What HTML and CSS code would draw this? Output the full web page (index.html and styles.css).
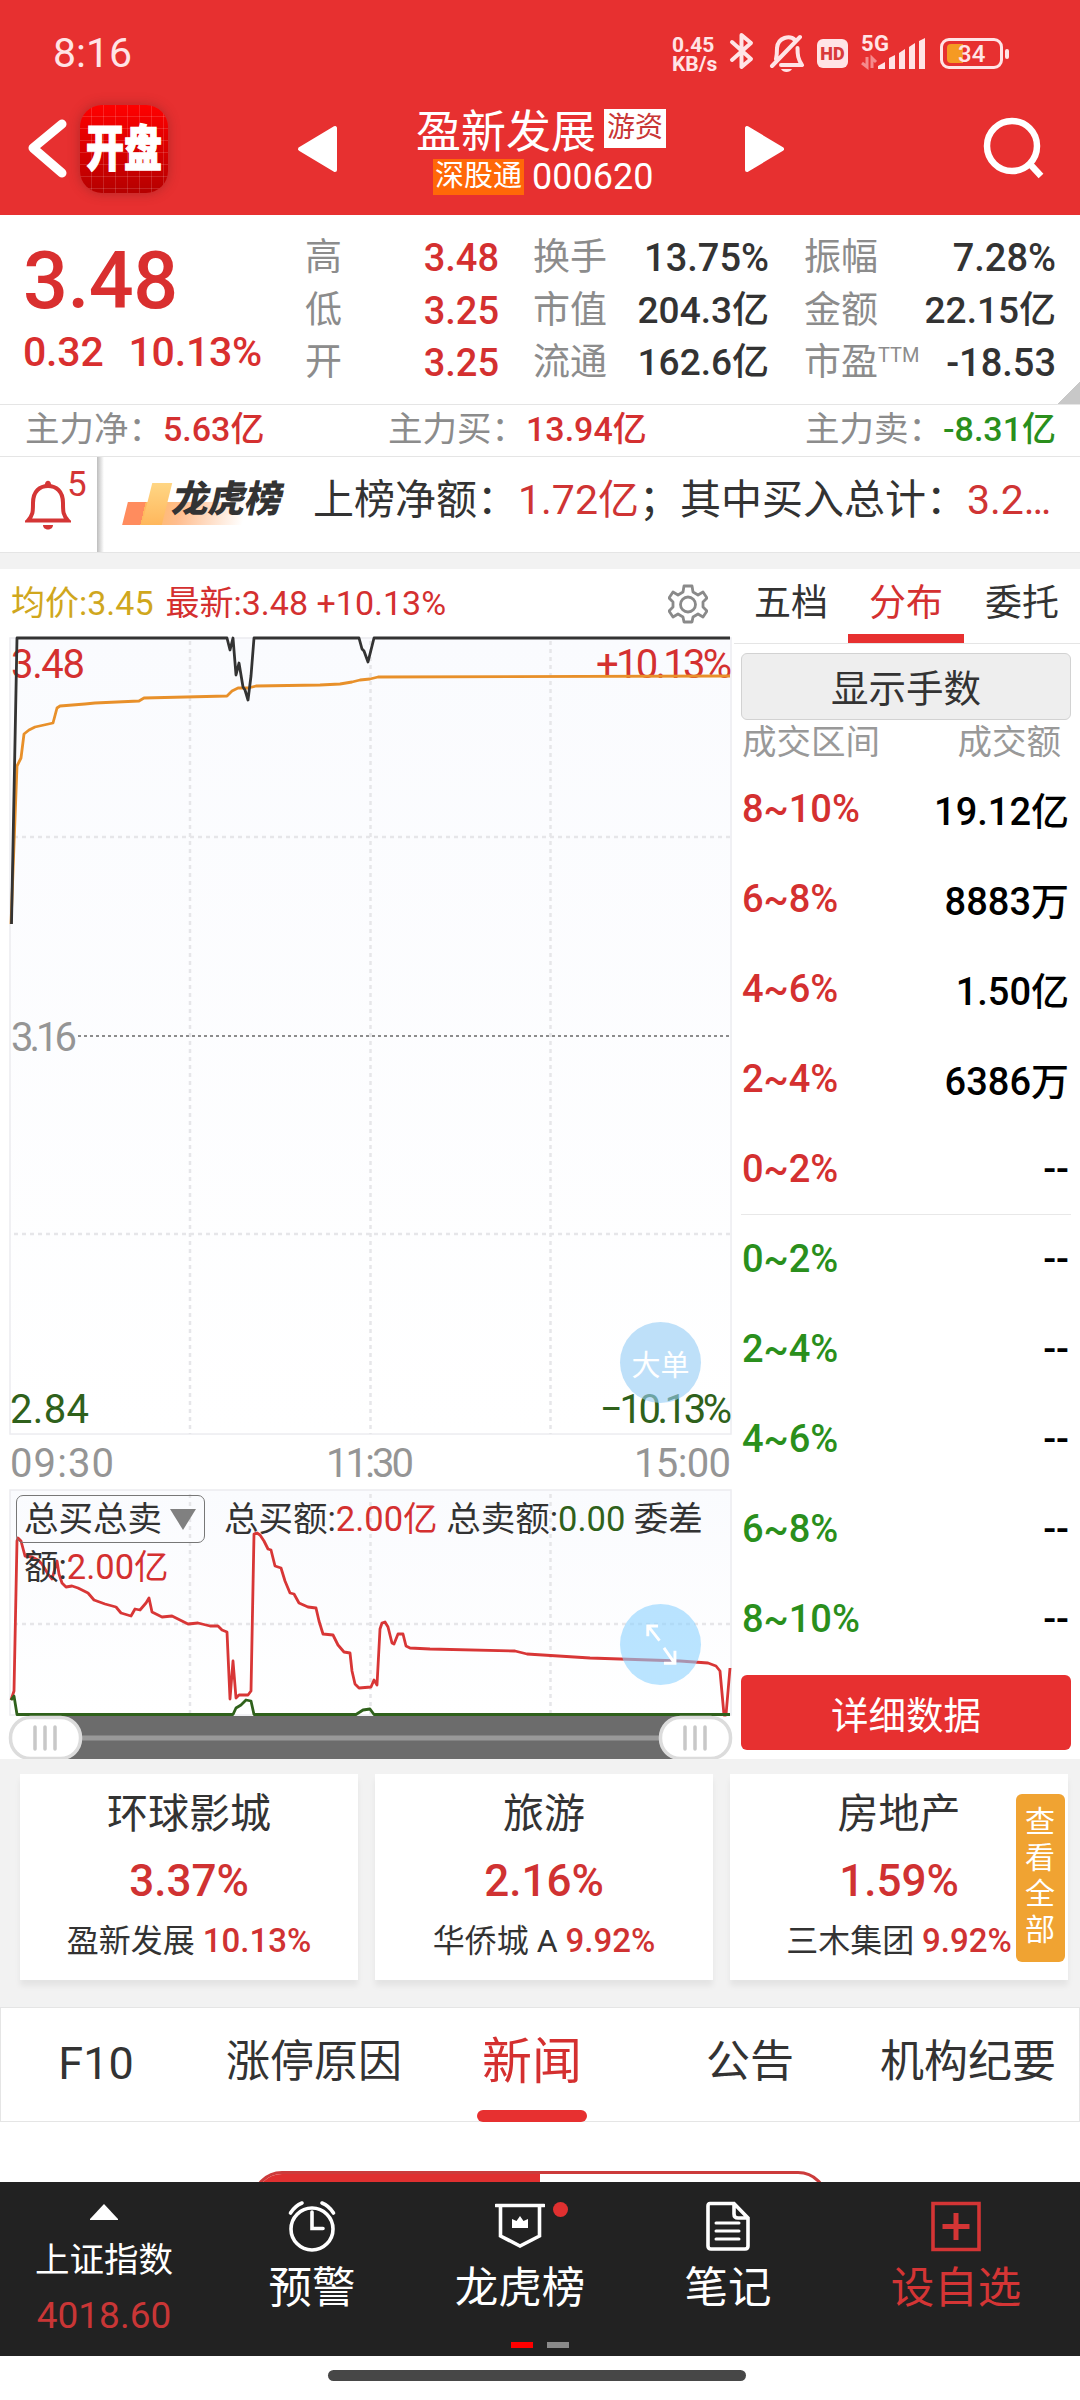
FILE: index.html
```html
<!DOCTYPE html>
<html lang="zh-CN">
<head>
    <meta charset="UTF-8">
    <meta name="viewport" content="width=device-width, initial-scale=1.0">
    <title>盈新发展 000620</title>
    <link rel="stylesheet" href="styles.css">
</head>
<body>
    <header class="header">
        <!-- Status bar -->
        <div class="status">
            <span class="clock">8:16</span>
            <div class="status-right">
                <div class="speed">0.45<br>KB/s</div>
                <svg class="bt" width="26" height="38" viewBox="0 0 26 38"><path d="M3 10 L22 27 L12.500 35 V3 L22 11 L3 28"/></svg>
                <svg class="mute" width="36" height="40" viewBox="0 0 36 40"><path d="M7 25 C8 21 8 18 8 14 C9 3 21 1 26 6 M28.500 14 C28.500 21 29 25 33 31 H12 M3 32 L31 3"/><path class="solid" d="M12 35 H23 C21 39 14 39 12 35 Z"/></svg>
                <span class="hd">HD</span>
                <svg class="signal" width="66" height="36" viewBox="0 0 66 36">
                    <path class="updown" d="M7 22 V32 L2 28 M12 33 V23 L16 27"/>
                    <path d="M18 31 L25 27 V34 H18 Z M29 23 L35 20 V34 H29 Z M39 18 L45 14 V34 H39 Z M49 12 L55 8 V34 H49 Z M59 6 L65 3 V34 H59 Z"/>
                    <text x="1" y="16" textLength="28">5G</text>
                </svg>
                <div class="battery"><i></i><b>34</b></div>
            </div>
        </div>
        <!-- Title bar -->
        <div class="titlebar">
            <svg class="back" width="40" height="62" viewBox="0 0 40 62"><path d="M35 6 L6 30 L35 55"/></svg>
            <div class="logo"><span>开盘</span></div>
            <svg class="prev" width="42" height="48" viewBox="0 0 42 48"><path d="M3 24 L38 3 V45 Z"/></svg>
            <div class="stock">
                <div class="stock-name">盈新发展<span class="tag">游资</span></div>
                <div class="stock-code"><span class="hk">深股通</span>000620</div>
            </div>
            <svg class="next" width="42" height="48" viewBox="0 0 42 48"><path d="M39 24 L4 3 V45 Z"/></svg>
            <svg class="search" width="62" height="64" viewBox="0 0 62 64"><circle cx="29" cy="29" r="25"/><path d="M46 46 L58 59"/></svg>
        </div>
    </header>

    <!-- Quote -->
    <section class="quote">
        <div class="price">
            <div class="last">3.48</div>
            <div class="change"><span>0.32</span><span>10.13%</span></div>
        </div>
        <dl class="stats">
            <dt>高</dt><dd class="up">3.48</dd><dt>换手</dt><dd>13.75%</dd><dt>振幅</dt><dd>7.28%</dd>
            <dt>低</dt><dd class="up">3.25</dd><dt>市值</dt><dd class="cn">204.3亿</dd><dt>金额</dt><dd class="cn">22.15亿</dd>
            <dt>开</dt><dd class="up">3.25</dd><dt>流通</dt><dd class="cn">162.6亿</dd><dt>市盈<sup>TTM</sup></dt><dd>-18.53</dd>
        </dl>
        <i class="corner"></i>
    </section>
    <section class="flow">
        <div>主力净：<b class="up">5.63亿</b></div>
        <div>主力买：<b class="up">13.94亿</b></div>
        <div>主力卖：<b class="down">-8.31亿</b></div>
    </section>
    <section class="notice">
        <div class="bell">
            <svg width="46" height="54" viewBox="0 0 46 54"><path d="M3 42.500 H43 C38 37 38 34 38 25 C38 13 31 8 23 8 C15 8 8 13 8 25 C8 34 8 37 3 42.500 Z"/><path class="solid" d="M20 8 C19 1 27 1 26 8 Z M18 47 H28 C28 53 18 53 18 47 Z"/></svg>
            <span>5</span>
        </div>
        <div class="lhb">
            <i class="s1"></i><i class="s2"></i>
            <span>龙虎榜</span>
        </div>
        <p>上榜净额：<em class="n1">1.72亿</em>；其中买入总计：<em class="n2">3.2…</em></p>
    </section>

    <!-- Chart and distribution -->
    <section class="market">
        <div class="chart">
            <svg width="734" height="1190" viewBox="0 569 734 1190">
                <defs>
                    <linearGradient id="bg" x1="0" y1="0" x2="0" y2="1">
                        <stop offset="0" stop-color="#fafbfe"/>
                        <stop offset="1" stop-color="#ffffff"/>
                    </linearGradient>
                </defs>
                <rect class="frame" x="10" y="637" width="721" height="796" fill="url(#bg)"/>
                <rect class="frame" x="10" y="1489" width="721" height="225" fill="url(#bg)"/>
                <path class="grid" d="M190 640 V1433 M370.500 640 V1433 M550.500 640 V1433 M14 836 H731 M14 1233 H731 M190 1493 V1714 M370.500 1493 V1714 M550.500 1493 V1714 M14 1623 H731"/>
                <path class="zero" d="M78 1035 H731"/>
                <g class="axis">
                    <text class="up" x="11" y="677" textLength="74">3.48</text>
                    <text class="up" x="596" y="677" textLength="136">+10.13%</text>
                    <text x="11" y="1050" textLength="66">3.16</text>
                    <text class="low" x="10" y="1422" textLength="79">2.84</text>
                    <text class="low" x="600" y="1422" textLength="132">−10.13%</text>
                    <text x="10" y="1476" textLength="104">09:30</text>
                    <text x="326" y="1476" textLength="88">11:30</text>
                    <text x="634" y="1476" textLength="97">15:00</text>
                </g>
                <polyline class="avg" points="11,923 17,765 21,757 24,733 29,729 35,726 53,722 57,707 60,705 85,703 95,702 139,700 144,697 227,695 232,690 238,687 248,687 256,685 320,684 340,683 352,681 360,679 370,678 378,676 730,675"/>
                <polyline class="now" points="11.500,923 17,637 227,637 230,649 233,637 236,674 239,662 243,686 245,689 248,699 251,675 254,637 359,637 362,648 364,650 368,661 374,637 730,637"/>
                <polyline class="buy" points="11,1699 14,1690 17,1540 18,1537 21,1540 25,1555 32,1556 38,1559 42,1563 48,1573 52,1578 57,1560 59,1573 62,1582 66,1586 72,1585 78,1587 88,1592 94,1599 105,1603 116,1606 121,1612 131,1615 135,1608 140,1609 146,1602 149,1597 152,1611 162,1616 172,1615 180,1619 188,1623 198,1622 210,1625 218,1625 222,1629 227,1631 230,1698 233,1660 236,1697 239,1694 248,1694 251,1690 254,1533 257,1532 260,1534 264,1540 268,1548 271,1549 275,1565 281,1567 285,1580 290,1592 294,1593 299,1602 308,1606 316,1607 319,1620 323,1633 333,1634 338,1644 344,1651 350,1652 352,1670 355,1683 359,1687 371,1686 374,1679 377,1684 380,1628 382,1622 385,1621 388,1626 392,1642 394,1643 398,1633 403,1633 406,1645 410,1647 430,1648 515,1650 527,1653 590,1657 680,1660 708,1662 716,1665 720,1670 724,1714 726,1714 730,1667"/>
                <polyline class="sell" points="11,1699 14,1695 17,1713.500 233,1713.500 236,1707 241,1704 246,1699 251,1700 254,1713.500 356,1713.500 363,1709 370,1708 374,1713.500 730,1713.500"/>
                <!-- range slider -->
                <rect x="45" y="1715" width="651" height="44" fill="#6c6c6c"/>
                <path d="M80 1737 H662" stroke="#999" stroke-width="5"/>
                <g class="handle">
                    <rect x="10.500" y="1716.500" width="70" height="41" rx="20"/>
                    <rect x="660.500" y="1716.500" width="70" height="41" rx="20"/>
                    <path d="M35 1726 V1748 M45 1726 V1748 M55 1726 V1748 M685 1726 V1748 M695 1726 V1748 M705 1726 V1748"/>
                </g>
            </svg>
            <div class="chart-head">
                <span class="gold">均价:3.45</span>
                <span class="up">最新:3.48 +10.13%</span>
                <svg class="gear" width="40" height="40" viewBox="0 0 40 40"><path d="M16 2 H24 L25 8 L30 11 L35 8 L39 14 L35 18 V23 L39 27 L35 33 L30 30 L25 33 L24 38 H16 L15 33 L10 30 L5 33 L1 27 L5 23 V18 L1 14 L5 8 L10 11 L15 8 Z"/><circle cx="20" cy="20.500" r="7.500"/></svg>
            </div>
            <div class="legend"><span class="select">总买总卖<i></i></span>总买额:<span class="up">2.00亿</span> 总卖额:<span class="low">0.00</span> 委差<br>额:<span class="up">2.00亿</span></div>
            <button class="float big">大单</button>
            <button class="float expand"><svg width="44" height="60" viewBox="0 0 44 60"><path d="M4 18 V4 H18 M5 5 L20 24 M26 34 L40 54 M41 38 V55 H26"/></svg></button>
        </div>

        <aside class="side">
            <nav class="side-tabs"><a>五档</a><a class="on">分布</a><a>委托</a></nav>
            <button class="lots">显示手数</button>
            <div class="side-head"><span>成交区间</span><span>成交额</span></div>
            <ul class="dist">
                <li><b class="up">8~10%</b><span>19.12亿</span></li>
                <li><b class="up">6~8%</b><span>8883万</span></li>
                <li><b class="up">4~6%</b><span>1.50亿</span></li>
                <li><b class="up">2~4%</b><span>6386万</span></li>
                <li><b class="up">0~2%</b><span>--</span></li>
                <li class="split"><b class="down">0~2%</b><span>--</span></li>
                <li><b class="down">2~4%</b><span>--</span></li>
                <li><b class="down">4~6%</b><span>--</span></li>
                <li><b class="down">6~8%</b><span>--</span></li>
                <li><b class="down">8~10%</b><span>--</span></li>
            </ul>
            <button class="detail">详细数据</button>
        </aside>
    </section>

    <!-- Related sectors -->
    <section class="sectors">
        <div class="card"><h3>环球影城</h3><strong>3.37%</strong><p>盈新发展 <b>10.13%</b></p></div>
        <div class="card"><h3>旅游</h3><strong>2.16%</strong><p>华侨城 A <b>9.92%</b></p></div>
        <div class="card"><h3>房地产</h3><strong>1.59%</strong><p>三木集团 <b>9.92%</b></p></div>
        <a class="all">查看全部</a>
    </section>

    <nav class="tabs">
        <a class="latin">F10</a><a>涨停原因</a><a class="on">新闻</a><a>公告</a><a>机构纪要</a>
    </nav>
    <div class="news"><div class="pill"><i></i></div></div>

    <!-- Bottom bar -->
    <footer class="bottom">
        <div class="index">
            <svg width="30" height="18" viewBox="0 0 30 18"><path d="M15 1 L29 16 V17 H1 V16 Z" fill="#fff"/></svg>
            <span>上证指数</span>
            <em>4018.60</em>
        </div>
        <div class="item">
            <svg width="50" height="52" viewBox="0 0 50 52"><circle cx="25" cy="29" r="21"/><path d="M25 12 V28.500 H36 M3.500 13 C6 9 10 5 15 3 M35 3 C40 5 44 9 46.500 13"/></svg>
            <span>预警</span>
        </div>
        <div class="item">
            <svg width="50" height="52" viewBox="0 0 50 52"><path d="M1 5.500 H49 M5.500 6 V36 L25 46 L44.500 36 V6"/><path class="solid" d="M17 19 L21.500 21 L25 16 L28.500 21 L33 19 V28 H17 Z"/></svg>
            <span>龙虎榜</span>
            <i class="dot"></i>
        </div>
        <div class="item">
            <svg width="50" height="52" viewBox="0 0 50 52"><path d="M7 3.500 H31 L45 18 V46 Q45 49 42 49 H8 Q5 49 5 46 V6 Q5 3.500 7 3.500 Z M31 4 V14 Q31 18 35 18 H44"/><path class="thin" d="M13 23 H36 M13 31 H36 M13 39 H36"/></svg>
            <span>笔记</span>
        </div>
        <div class="item add">
            <svg width="50" height="52" viewBox="0 0 50 52"><path d="M2 3.500 H48 V49.500 H2 Z"/><path class="plus" d="M25 13 V40 M11.500 26.500 H38.500"/></svg>
            <span>设自选</span>
        </div>
        <div class="pages"><i class="cur"></i><i></i></div>
    </footer>
    <div class="home"><i></i></div>
</body>
</html>
```
FILE: styles.css
```css
* {
    box-sizing: border-box;
    margin: 0;
    padding: 0;
}

body {
    width: 1080px;
    height: 2400px;
    overflow: hidden;
    background: #fff;
    color: #333;
    font-family: Roboto, "Noto Sans CJK SC", sans-serif;
}

svg {
    display: block;
    flex: none;
}

i, em {
    font-style: normal;
}

button {
    border: none;
    font-family: inherit;
}

.up { color: #d43030; }
.down { color: #2a8f1c; }
.low { color: #2f611b; }
.gold { color: #d0a71d; }

/* Header */
.header {
    height: 215px;
    background: #e73030;
    color: #fff;
}

.status {
    display: flex;
    justify-content: space-between;
    height: 100px;
    padding: 32px 71px 0 53px;
    color: #ffe4e6;
}

.clock {
    font-size: 41px;
    line-height: 42px;
}

.status-right {
    display: flex;
    align-items: flex-start;
}

.speed {
    width: 57px;
    padding-top: 4px;
    font-size: 21px;
    font-weight: 700;
    line-height: 19px;
}

.bt path, .mute path {
    fill: none;
    stroke: #ffe4e6;
    stroke-width: 4;
    stroke-linecap: round;
    stroke-linejoin: round;
}

.mute .solid {
    fill: #ffe4e6;
    stroke: none;
}

.mute {
    margin: 2px 0 0 14px;
}

.hd {
    width: 31px;
    height: 29px;
    margin: 7px 0 0 12px;
    border-radius: 6px;
    background: #ffe4e6;
    color: #d83a3a;
    font-size: 18px;
    font-weight: 900;
    line-height: 30px;
    text-align: center;
}

.signal {
    margin: 3px 14px 0 12px;
    fill: #ffe4e6;
    font-size: 22px;
    font-weight: 700;
}

.signal .updown {
    fill: none;
    stroke: #f58a8c;
    stroke-width: 3;
}

.battery {
    display: flex;
    align-items: center;
    position: relative;
    width: 63px;
    height: 31px;
    margin: 6px 6px 0 0;
    padding-left: 4px;
    border: 3px solid #ffe4e6;
    border-radius: 9px;
}

.battery i {
    width: 16px;
    height: 19px;
    border-radius: 4px 0 0 4px;
    background: #f59a23;
}

.battery b {
    margin-left: -5px;
    font-size: 24px;
    font-weight: 500;
}

.battery::after {
    content: "";
    position: absolute;
    right: -9px;
    top: 8px;
    width: 4px;
    height: 10px;
    border-radius: 2px;
    background: #ffe4e6;
}

.titlebar {
    display: flex;
    align-items: flex-start;
    height: 115px;
    padding-left: 27px;
}

.back {
    margin-top: 18px;
}

.back path {
    fill: none;
    stroke: #fff;
    stroke-width: 9;
    stroke-linecap: round;
    stroke-linejoin: round;
}

.logo {
    display: flex;
    align-items: center;
    justify-content: center;
    width: 88px;
    height: 88px;
    margin: 5px 0 0 13px;
    border-radius: 22px;
    background:
        repeating-linear-gradient(90deg, transparent 0 11px, rgba(255, 255, 255, 0.14) 11px 12px),
        repeating-linear-gradient(transparent 0 11px, rgba(255, 255, 255, 0.14) 11px 12px),
        linear-gradient(#ff0000, #b50000);
    box-shadow: 0 0 12px rgba(110, 30, 30, 0.45);
}

.logo span {
    font-size: 38px;
    font-weight: 900;
    line-height: 50px;
    transform: scaleY(1.3);
    -webkit-text-stroke: 1px #fff;
}

.prev, .next {
    margin-top: 25px;
    fill: #fff;
    stroke: #fff;
    stroke-width: 4;
    stroke-linejoin: round;
}

.prev {
    margin-left: 129px;
}

.stock {
    width: 252px;
    margin: 0 75px 0 77px;
}

.stock-name {
    display: flex;
    align-items: center;
    height: 57px;
    font-size: 45px;
}

.tag {
    width: 62px;
    height: 39px;
    margin-left: 8px;
    background: #fff;
    color: #c93636;
    font-size: 28px;
    line-height: 37px;
    text-align: center;
}

.stock-code {
    display: flex;
    align-items: center;
    height: 40px;
    padding-left: 17px;
    font-size: 36px;
}

.hk {
    width: 91px;
    height: 36px;
    margin-right: 8px;
    background: #ff6808;
    font-size: 29px;
    line-height: 34px;
    text-align: center;
}

.search {
    margin: 17px 0 0 198px;
    fill: none;
    stroke: #fff;
    stroke-width: 6.5;
}

/* Quote */
.quote {
    display: flex;
    position: relative;
    height: 190px;
    border-bottom: 1px solid #e5e5e5;
}

.price {
    width: 305px;
    padding: 20px 0 0 23px;
    color: #d92f2f;
}

.last {
    font-size: 79px;
    font-weight: 500;
    line-height: 92px;
    letter-spacing: -0.5px;
}

.change {
    display: flex;
    gap: 25px;
    font-size: 41px;
    font-weight: 500;
    line-height: 50px;
    letter-spacing: -0.2px;
}

.stats {
    display: grid;
    grid-template-columns: 76px 118px 34px 98px 138px 35px 110px 142px;
    grid-template-rows: repeat(3, 52.5px);
    align-items: center;
    padding-top: 17px;
    font-size: 38px;
    line-height: 52px;
}

.stats dt {
    color: #8c8c8c;
    font-size: 37px;
    white-space: nowrap;
}

.stats dt:nth-of-type(3n+2) { grid-column: 4; }
.stats dt:nth-of-type(3n) { grid-column: 7; }

.stats dd {
    font-weight: 500;
    text-align: right;
    white-space: nowrap;
}

.stats .cn {
    font-size: 37px;
}

.stats sup {
    display: inline-block;
    font-size: 20px;
    line-height: 20px;
    vertical-align: 13px;
}

.corner {
    position: absolute;
    right: 0;
    bottom: 0;
    border: solid transparent;
    border-width: 23px 0 0 23px;
    border-right: 0 solid #c8c8c8;
    background: linear-gradient(135deg, transparent 50%, #c8c8c8 50%) border-box;
}

.flow {
    display: grid;
    grid-template-columns: 363px 417px 1fr;
    height: 52px;
    padding-left: 25px;
    border-bottom: 1px solid #e5e5e5;
    color: #8c8c8c;
    font-size: 34.5px;
    line-height: 48px;
}

.flow b {
    font-size: 34px;
    font-weight: 500;
}

.notice {
    display: flex;
    height: 95px;
    background: #fff;
}

.bell {
    display: flex;
    width: 97px;
    padding: 21px 0 0 25px;
    color: #d43535;
}

.bell path {
    fill: none;
    stroke: #d43535;
    stroke-width: 4;
}

.bell .solid {
    fill: #d43535;
    stroke: none;
}

.bell span {
    margin: -14px 0 0 -4px;
    font-size: 35px;
    line-height: 42px;
}

.lhb {
    position: relative;
    width: 214px;
    padding-left: 76px;
    background: linear-gradient(90deg, #bdbdbd, #fff) 0 0 / 7px 100% no-repeat;
    font-size: 37px;
    font-weight: 900;
    line-height: 86px;
    letter-spacing: -0.5px;
}

.lhb span {
    display: inline-block;
    position: relative;
    transform: skewX(-12deg);
}

.lhb .s1, .lhb .s2 {
    position: absolute;
    transform: skewX(-14deg);
}

.lhb .s1 {
    left: 28px;
    top: 45px;
    width: 120px;
    height: 23px;
    background: linear-gradient(90deg, #ff8c5e 0 15%, #ffb75c 15%, #ffbd8e 45%, #fff);
}

.lhb .s2 {
    left: 50px;
    top: 26px;
    width: 20px;
    height: 42px;
    background: linear-gradient(#ffd684, #ffb75c);
}

.notice p {
    padding-left: 2px;
    font-size: 41px;
    line-height: 87px;
    white-space: nowrap;
}

.notice em {
    color: #cf3434;
}

/* Chart and distribution */
.market {
    display: flex;
    height: 1207px;
    padding-top: 17px;
    border-top: 1px solid #e5e5e5;
    background: linear-gradient(#f2f2f2 16px, #fff 16px);
}

.chart {
    position: relative;
    width: 734px;
    height: 1190px;
}

.frame {
    stroke: #ececf0;
    stroke-width: 1.5;
}

.grid {
    stroke: #e6e6e9;
    stroke-width: 2.5;
    stroke-dasharray: 4 4;
}

.zero {
    stroke: #8c8c8c;
    stroke-width: 2;
    stroke-dasharray: 3 3;
}

.axis text {
    fill: #959595;
    font-size: 40px;
}

.axis .up { fill: #d43030; }
.axis .low { fill: #2f611b; }

.avg, .now, .buy, .sell {
    fill: none;
    stroke-width: 2.8;
    stroke-linejoin: round;
}

.avg { stroke: #e8902a; }
.now { stroke: #333; }
.buy { stroke: #d83636; }
.sell { stroke: #2f611b; }

.handle rect {
    fill: #fff;
    stroke: #dcdcdc;
    stroke-width: 3.5;
}

.handle path {
    stroke: #c8c8c8;
    stroke-width: 3.5;
    stroke-linecap: round;
}

.chart-head {
    display: flex;
    position: absolute;
    left: 11px;
    top: 9px;
    width: 697px;
    gap: 12px;
    font-size: 34px;
    line-height: 48px;
}

.gear {
    margin: 5px 0 0 auto;
    fill: none;
    stroke: #8a8a8a;
    stroke-width: 2.8;
    stroke-linejoin: round;
}

.legend {
    position: absolute;
    left: 24px;
    top: 925px;
    font-size: 34.5px;
    line-height: 48px;
    white-space: nowrap;
}

.select {
    display: inline-flex;
    align-items: center;
    justify-content: space-between;
    width: 189px;
    height: 48px;
    margin: 0 19px 0 -8px;
    padding: 0 8px 0 7px;
    border: 1.5px solid #777;
    border-radius: 7px;
    line-height: 44px;
    vertical-align: top;
}

.select i {
    border: 13px solid transparent;
    border-top: 21px solid #808080;
    border-bottom: 0;
}

.float {
    display: flex;
    align-items: center;
    justify-content: center;
    position: absolute;
    left: 620px;
    width: 81px;
    height: 81px;
    border-radius: 50%;
    background: rgba(150, 205, 245, 0.62);
    color: #fff;
    font-size: 29px;
}

.big { top: 752px; }

.expand {
    top: 1034px;
    background: rgba(140, 210, 255, 0.6);
}

.expand svg {
    height: 44px;
    fill: none;
    stroke: #fff;
    stroke-width: 4;
}

.side {
    width: 346px;
    padding-right: 9px;
}

.side-tabs {
    display: flex;
    height: 74px;
    margin-right: -9px;
    border-bottom: 1px solid #e5e5e5;
    font-size: 37px;
    line-height: 67px;
    text-align: center;
}

.side-tabs a {
    width: 116px;
}

.side-tabs a:first-child { width: 114px; }

.side-tabs .on {
    border-bottom: 9px solid #e73030;
    color: #d43030;
}

.lots, .detail {
    display: block;
    width: 330px;
    margin-left: 7px;
    border-radius: 6px;
    font-size: 37.5px;
}

.lots {
    height: 67px;
    margin-top: 9px;
    padding-bottom: 3px;
    border: 1px solid #d2d2d2;
    background: #eee;
    color: #333;
}

.side-head {
    display: flex;
    justify-content: space-between;
    height: 44px;
    padding: 0 10px 0 8px;
    color: #999;
    font-size: 34.5px;
    line-height: 44px;
}

.dist {
    height: 900px;
    margin-left: 7px;
    list-style: none;
    color: #000;
}

.dist li {
    display: flex;
    align-items: center;
    justify-content: space-between;
    height: 90px;
    padding: 0 2px 1px 1px;
    font-size: 38px;
    font-weight: 500;
}

.dist b {
    font-weight: 500;
}

.dist .split {
    border-top: 1px solid #e8e8e8;
}

.detail {
    height: 75px;
    margin-top: 11px;
    background: #e73030;
    color: #fff;
}

/* Sectors */
.sectors {
    display: flex;
    gap: 17px;
    position: relative;
    height: 248px;
    padding: 15px 12px 0 20px;
    background: #f2f2f2;
}

.card {
    width: 338px;
    height: 206px;
    padding-top: 11px;
    background: #fff;
    box-shadow: 0 6px 6px rgba(0, 0, 0, 0.06);
    text-align: center;
}

.card h3 {
    font-size: 41px;
    font-weight: 400;
    line-height: 58px;
}

.card strong {
    display: block;
    color: #d03232;
    font-size: 44px;
    font-weight: 500;
    line-height: 76px;
}

.card p {
    font-size: 32px;
    line-height: 44px;
    white-space: nowrap;
}

.card b {
    color: #d03232;
    font-size: 33px;
    font-weight: 500;
}

.all {
    position: absolute;
    right: 15px;
    top: 35px;
    width: 49px;
    height: 168px;
    padding: 10px 9px;
    border-radius: 6px;
    background: #f0a332;
    color: #fff;
    font-size: 30px;
    line-height: 36px;
}

/* Content tabs */
.tabs {
    display: flex;
    height: 115px;
    padding-right: 0;
    border: 1px solid #e5e5e5;
    font-size: 44px;
    line-height: 108px;
}

.tabs a {
    flex: none;
    width: 218px;
    text-align: center;
}

.tabs a:first-child {
    width: 204px;
    padding-right: 14px;
}

.tabs .latin {
    font-size: 45px;
    line-height: 112px;
}

.tabs .on {
    position: relative;
    color: #d43030;
    font-size: 50px;
}

.tabs .on::after {
    content: "";
    position: absolute;
    left: 54px;
    bottom: -1px;
    width: 110px;
    height: 12px;
    border-radius: 6px;
    background: #e73030;
}

.news {
    height: 60px;
    padding: 49px 252px 0;
    overflow: hidden;
}

.pill {
    height: 60px;
    border: 3px solid #cc3b3b;
    border-radius: 30px;
    overflow: hidden;
}

.pill i {
    display: block;
    width: 50%;
    height: 60px;
    background: #e03030;
}

/* Bottom bar */
.bottom {
    display: grid;
    grid-template-columns: repeat(4, 208px) 248px;
    position: relative;
    height: 174px;
    background: #222;
    color: #fff;
}

.index, .item {
    display: flex;
    flex-direction: column;
    align-items: center;
    position: relative;
}

.index {
    padding-top: 21px;
    font-size: 34.5px;
}

.index span {
    margin-top: 13px;
    line-height: 52px;
}

.index em {
    margin-top: 4px;
    color: #c93636;
    font-size: 37px;
    line-height: 52px;
}

.item {
    padding-top: 18px;
    font-size: 43.5px;
}

.item svg {
    fill: none;
    stroke: #fff;
    stroke-width: 3.6;
    stroke-linecap: round;
}

.item .solid {
    fill: #fff;
    stroke: none;
}

.item .thin {
    stroke-width: 3;
}

.item span {
    margin-top: 7px;
    line-height: 60px;
}

.add {
    color: #d43535;
}

.add svg {
    stroke: #d43535;
    stroke-linecap: butt;
}

.add .plus {
    stroke-width: 5;
}

.dot {
    position: absolute;
    left: 137px;
    top: 20px;
    width: 15px;
    height: 15px;
    border-radius: 50%;
    background: #e03030;
}

.pages {
    display: flex;
    gap: 14px;
    position: absolute;
    left: 511px;
    bottom: 8px;
}

.pages i {
    width: 22px;
    height: 6px;
    background: #8a8a8a;
}

.pages .cur {
    background: #ff0000;
}

.home {
    padding-top: 14px;
}

.home i {
    display: block;
    width: 418px;
    height: 11px;
    margin-left: 328px;
    border-radius: 6px;
    background: #474747;
}
```
